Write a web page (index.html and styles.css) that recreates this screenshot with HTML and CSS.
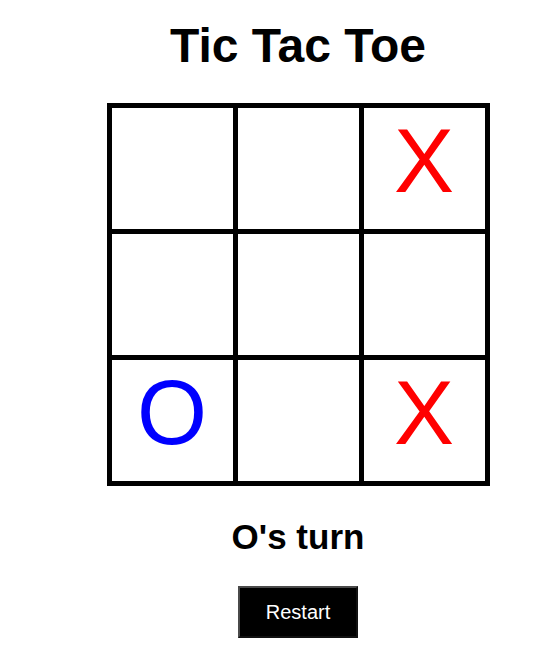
FILE: index.html
```html
<!DOCTYPE html>
<html lang="en">
  <head>
    <meta charset="UTF-8" />
    <meta name="viewport" content="width=device-width, initial-scale=1.0" />
    <title>Tic Tac Toe</title>
    <link rel="stylesheet" href="styles.css">
  </head>
  <body>
    <div class="game">
      <h1>Tic Tac Toe</h1>
      <div class="board">
        <div class="cell"></div>
        <div class="cell"></div>
        <div class="cell x">X</div>
        <div class="cell"></div>
        <div class="cell"></div>
        <div class="cell"></div>
        <div class="cell o">O</div>
        <div class="cell"></div>
        <div class="cell x">X</div>
      </div>
      <h2 class="status">O's turn</h2>
      <button class="restart">Restart</button>
    </div>
  </body>
</html>
```

FILE: styles.css
```css
body {
  margin: 0;
  padding: 0 0 0 42px;
  background-color: white;
  font-family: "Liberation Sans", Arial, sans-serif;
}
.game {
  display: flex;
  flex-direction: column;
  align-items: center;
}
h1 {
  font-size: 48px;
  margin: 18px 0 30px;
  line-height: 1.15;
}
.board {
  display: grid;
  grid-template-columns: repeat(3, 121px);
  grid-template-rows: repeat(3, 121px);
  gap: 5px;
  padding: 5px;
  background-color: black;
}
.cell {
  background-color: white;
  font-size: 90px;
  line-height: 1.15;
  text-align: center;
  padding-top: 2px;
}
.cell.x {
  color: red;
}
.cell.o {
  color: blue;
}
.status {
  font-size: 35px;
  margin: 31px 0 29px;
  line-height: 1.15;
}
.restart {
  width: 120px;
  height: 52px;
  background-color: black;
  color: white;
  font-family: "Liberation Sans", Arial, sans-serif;
  font-size: 20px;
  border: 2px solid;
  border-color: #4a4a4a #111 #111 #4a4a4a;
  cursor: pointer;
}
```
